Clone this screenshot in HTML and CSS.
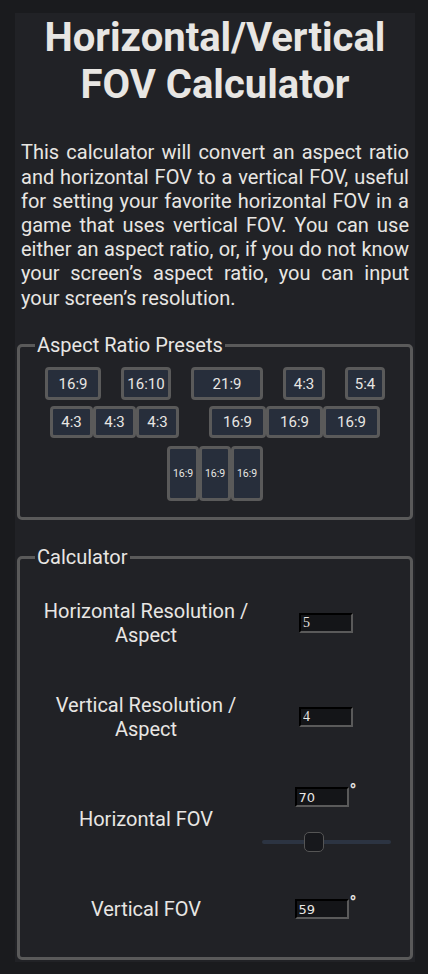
FILE: index.html
```html
<!DOCTYPE html>
<html lang="en">
<head>
<meta charset="utf-8">
<title>Horizontal/Vertical FOV Calculator</title>
<link rel="stylesheet" href="styles.css">
</head>
<body>
<div class="page">
  <h1 class="title">Horizontal/Vertical FOV Calculator</h1>
  <p class="intro">This calculator will convert an aspect ratio and horizontal FOV to a vertical FOV, useful for setting your favorite horizontal FOV in a game that uses vertical FOV. You can use either an aspect ratio, or, if you do not know your screen’s aspect ratio, you can input your screen’s resolution.</p>

  <fieldset class="box">
    <legend class="box-title">Aspect Ratio Presets</legend>
    <div class="presets">
      <button class="preset w169">16:9</button>
      <button class="preset w1610">16:10</button>
      <button class="preset w219">21:9</button>
      <button class="preset w43">4:3</button>
      <button class="preset w54">5:4</button>
      <div class="group">
        <button class="preset tri43">4:3</button><button class="preset tri43">4:3</button><button class="preset tri43">4:3</button>
      </div>
      <div class="group">
        <button class="preset tri169">16:9</button><button class="preset tri169">16:9</button><button class="preset tri169">16:9</button>
      </div>
      <div class="group portrait-group">
        <button class="preset portrait">16:9</button><button class="preset portrait">16:9</button><button class="preset portrait">16:9</button>
      </div>
    </div>
  </fieldset>

  <fieldset class="box calc">
    <legend class="box-title">Calculator</legend>
    <div class="calc-grid">
      <div class="label">Horizontal Resolution / Aspect</div>
      <div class="field"><input class="num serif" type="text" value="5"></div>

      <div class="label">Vertical Resolution / Aspect</div>
      <div class="field"><input class="num serif" type="text" value="4"></div>

      <div class="label">Horizontal FOV</div>
      <div class="field column">
        <div class="deg-line"><input class="num" type="text" value="70"><span class="deg">°</span></div>
        <input class="slider" type="range" min="1" max="179" value="70">
      </div>

      <div class="label">Vertical FOV</div>
      <div class="field">
        <div class="deg-line"><input class="num" type="text" value="59"><span class="deg">°</span></div>
      </div>
    </div>
  </fieldset>
</div>
</body>
</html>
```
FILE: styles.css
```css
html, body {
  margin: 0;
  padding: 0;
  background: #1a1b1e;
}
body {
  font-family: Roboto, "Liberation Sans", sans-serif;
  color: #e8e6e3;
}
.page {
  margin: 13px 13px 15px 15px;
  padding: 2px 0 2px;
  background: #212226;
}
.title {
  margin: 0;
  font-size: 40px;
  line-height: 46.7px;
  font-weight: 700;
  text-align: center;
}
.intro {
  margin: 32px 6px 24px;
  font-size: 20px;
  line-height: 24.2px;
  text-align: justify;
}
.box {
  margin: 0 2px;
  padding: 7px 15px 12.5px;
  border: 3px solid #5a5a5a;
  border-radius: 5px;
  font-size: 20px;
}
.box-title {
  padding: 0 2px;
  font-size: 20px;
  line-height: 23.4px;
}
.calc {
  margin-top: 26px;
}
.presets {
  display: flex;
  flex-wrap: wrap;
  justify-content: space-around;
  align-items: flex-start;
}
.presets > .preset, .presets > .group {
  margin: 3px 0;
}
.presets > .portrait-group {
  margin-top: 5px;
}
.group {
  display: flex;
}
.preset {
  box-sizing: border-box;
  margin: 0;
  padding: 0;
  height: 32px;
  border: 3px solid #5a5a5a;
  border-radius: 4px;
  background: #272e3b;
  color: #e8e6e3;
  font-family: Roboto, "Liberation Sans", sans-serif;
  font-size: 15px;
}
.w169 { width: 56px; height: 33px; }
.w1610 { width: 50px; height: 33px; }
.w219 { width: 72px; height: 33px; }
.w43 { width: 42px; height: 33px; }
.w54 { width: 40px; height: 33px; }
.tri43 { width: 43px; }
.tri169 { width: 57px; }
.portrait {
  width: 32px;
  height: 55px;
  font-size: 10.5px;
}
.calc-grid {
  display: grid;
  grid-template-columns: 222px 1fr;
  align-items: center;
}
.label {
  padding: 23px 0;
  text-align: center;
  font-size: 20px;
  line-height: 24px;
}
.field {
  padding: 23px 0;
  display: flex;
  justify-content: center;
  align-items: center;
}
.column {
  flex-direction: column;
}
.deg-line {
  display: flex;
  align-items: flex-start;
}
.deg {
  font-size: 18px;
  font-weight: 700;
  line-height: 14px;
  width: 8px;
  margin-top: -3px;
  padding-left: 1px;
}
.num {
  box-sizing: border-box;
  width: 54px;
  height: 20px;
  margin: 0;
  padding: 0 2px;
  border: 2px solid;
  border-color: #000 #5a5a5a #5a5a5a #000;
  background: #141518;
  color: #e8e6e3;
  font-family: "DejaVu Sans", sans-serif;
  font-size: 13px;
}
.serif {
  font-family: "Liberation Serif", serif;
  font-size: 14px;
}
.slider {
  -webkit-appearance: none;
  appearance: none;
  width: 129px;
  height: 19px;
  margin: 25px 0 0;
  background: transparent;
}
.slider::-webkit-slider-runnable-track {
  height: 4px;
  border-radius: 2px;
  background: #2c3442;
}
.slider::-webkit-slider-thumb {
  -webkit-appearance: none;
  appearance: none;
  width: 20px;
  height: 20px;
  margin-top: -8px;
  box-sizing: border-box;
  border: 1px solid #555;
  border-radius: 5px;
  background: #17181c;
}
```
